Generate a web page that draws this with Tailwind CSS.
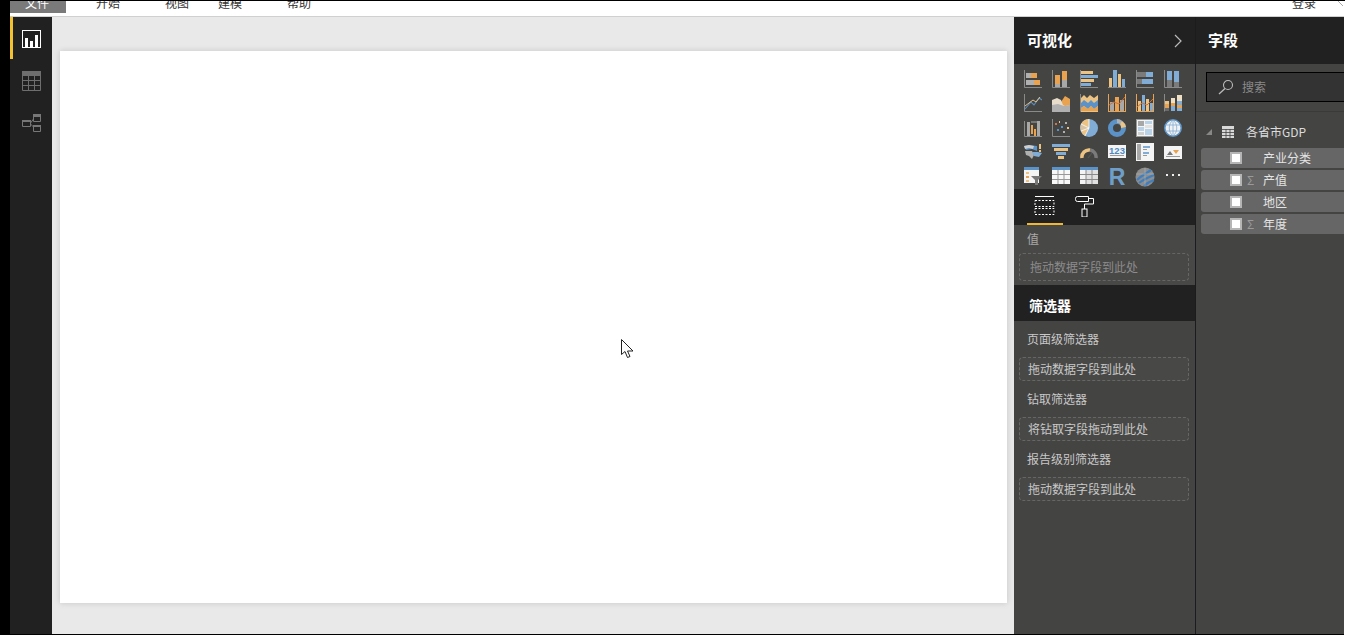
<!DOCTYPE html>
<html lang="zh">
<head>
<meta charset="utf-8">
<title>Power BI Desktop</title>
<script src="https://cdn.jsdelivr.net/npm/@tailwindcss/browser@4"></script>
</head>
<body class="w-[1345px] h-[635px] overflow-hidden bg-white flex font-['Noto_Sans_CJK_SC','Liberation_Sans',sans-serif] text-[12px] leading-[16px]">
<div class="w-[10px] h-full bg-black shrink-0"></div>
<div class="w-[1334px] h-full flex flex-col shrink-0">
  <!-- ribbon -->
  <header class="h-[17px] shrink-0 bg-white border-t border-t-black border-b border-b-[#d0d0d0] flex overflow-hidden text-[#333] text-[12px] leading-[14px] whitespace-nowrap">
    <div class="w-[56px] h-[12px] shrink-0 bg-[#7a7a7a] text-white pl-[15px] overflow-hidden"><span class="block -mt-[5px]">文件</span></div>
    <span class="ml-[30px] -mt-[5px] shrink-0">开始</span>
    <span class="ml-[45px] -mt-[5px] shrink-0">视图</span>
    <span class="ml-[29px] -mt-[5px] shrink-0">建模</span>
    <span class="ml-[45px] -mt-[5px] shrink-0">帮助</span>
    <span class="ml-[981px] -mt-[5px] shrink-0">登录</span>
    <svg class="ml-[22px] shrink-0" width="5" height="5" viewBox="0 0 5 5"><path d="M0 0L5 5" stroke="#aaa" stroke-width="1"/></svg>
  </header>
  <div class="flex-1 flex min-h-0">
    <!-- left nav -->
    <nav class="w-[42px] shrink-0 bg-[#212121] flex flex-col">
      <div class="h-[42px] border-l-[3px] border-l-[#f2c230] pl-[9px] pt-[13px]">
        <svg class="block" width="19" height="19" viewBox="0 0 19 19"><rect x="0.5" y="0.5" width="18" height="17" fill="none" stroke="#fff"/><rect x="3" y="8" width="3" height="9" fill="#fff"/><rect x="8" y="11" width="3" height="6" fill="#fff"/><rect x="13" y="5" width="3" height="12" fill="#fff"/></svg>
      </div>
      <div class="pl-[12px] pt-[12px]">
        <svg class="block" width="19" height="20" viewBox="0 0 19 20"><rect x="0" y="0" width="19" height="5" fill="#6e6e6e"/><path d="M0.5 0.5H18.5V19.5H0.5ZM0.5 9.5H18.5M0.5 14.5H18.5M6.5 4V19.5M12.5 4V19.5" fill="none" stroke="#6e6e6e"/></svg>
      </div>
      <div class="pl-[12px] pt-[23px]">
        <svg class="block" width="19" height="18" viewBox="0 0 19 18"><path d="M0.5 6.5H8.5V12.5H0.5ZM11.5 0.5H18.5V7.5H11.5ZM11.5 11.5H18.5V17.5H11.5ZM8.5 9L11.5 5M8.5 10L11.5 13" fill="none" stroke="#777"/><rect x="11" y="0" width="8" height="3" fill="#777"/><rect x="11" y="11" width="8" height="2" fill="#777"/><rect x="0" y="6" width="9" height="2" fill="#777"/></svg>
      </div>
    </nav>
    <!-- canvas -->
    <main class="w-[962px] shrink-0 bg-[#e9e9e9] pl-[8px] pt-[34px]">
      <div class="w-[947px] h-[552px] bg-white shadow-[0_0_6px_rgba(0,0,0,0.15)]"></div>
    </main>
    <!-- visualizations -->
    <section class="w-[181px] shrink-0 bg-[#444443] flex flex-col">
      <div class="h-[47px] bg-[#212121] flex items-center justify-between pl-[13px] pr-[12px] shrink-0 text-white text-[15px] font-semibold">
        <span class="-mt-[1px]">可视化</span>
        <svg width="10" height="14" viewBox="0 0 10 14"><path d="M2 1L8 7L2 13" fill="none" stroke="#bbb" stroke-width="1.2"/></svg>
      </div>
      <div class="h-[125px] shrink-0 pl-[10px] pt-[6px] grid grid-cols-[repeat(6,18px)] auto-rows-[18px] gap-x-[10px] gap-y-[6.25px]">
        <!-- r1 -->
        <svg width="18" height="18" viewBox="0 0 18 18"><path d="M0.5 0V17.5H18" fill="none" stroke="#8a8a8a"/><rect x="2" y="3" width="5" height="5" fill="#b0b0b0"/><rect x="7" y="3" width="6" height="5" fill="#e9a24f"/><rect x="2" y="10" width="8" height="5" fill="#b0b0b0"/><rect x="10" y="10" width="6" height="5" fill="#e9a24f"/></svg>
        <svg width="18" height="18" viewBox="0 0 18 18"><path d="M0.5 0V17.5H18" fill="none" stroke="#8a8a8a"/><rect x="3" y="5" width="5" height="9" fill="#e9a24f"/><rect x="3" y="14" width="5" height="3" fill="#a8a8a8"/><rect x="10" y="1" width="5" height="9" fill="#e9a24f"/><rect x="10" y="10" width="5" height="7" fill="#a8a8a8"/></svg>
        <svg width="18" height="18" viewBox="0 0 18 18"><path d="M0.5 0V17.5H18" fill="none" stroke="#8a8a8a"/><rect x="1" y="1" width="12" height="3" fill="#ecc383"/><rect x="1" y="5" width="17" height="3" fill="#80acd6"/><rect x="1" y="9" width="13" height="3" fill="#ecc383"/><rect x="1" y="13" width="10" height="3" fill="#80acd6"/></svg>
        <svg width="18" height="18" viewBox="0 0 18 18"><path d="M0 17.5H18" stroke="#8a8a8a"/><rect x="1" y="8" width="3" height="9" fill="#ecc383"/><rect x="5" y="0" width="4" height="17" fill="#80acd6"/><rect x="10" y="4" width="3" height="13" fill="#ecc383"/><rect x="14" y="9" width="3" height="8" fill="#80acd6"/></svg>
        <svg width="18" height="18" viewBox="0 0 18 18"><path d="M0.5 0V17.5H18" fill="none" stroke="#8a8a8a"/><rect x="1" y="2" width="9" height="5" fill="#7b7b7b"/><rect x="10" y="2" width="7" height="5" fill="#80acd6"/><rect x="1" y="9" width="5" height="5" fill="#7b7b7b"/><rect x="6" y="9" width="11" height="5" fill="#80acd6"/></svg>
        <svg width="18" height="18" viewBox="0 0 18 18"><path d="M0.5 0V17.5H18" fill="none" stroke="#8a8a8a"/><rect x="3" y="1" width="5" height="9" fill="#80acd6"/><rect x="3" y="10" width="5" height="7" fill="#7b7b7b"/><rect x="10" y="1" width="5" height="11" fill="#80acd6"/><rect x="10" y="12" width="5" height="5" fill="#7b7b7b"/></svg>
        <!-- r2 -->
        <svg width="18" height="18" viewBox="0 0 18 18"><path d="M0.5 0V17.5H18" fill="none" stroke="#8a8a8a"/><path d="M1 15L7 8L10 11L15 4L18 6" fill="none" stroke="#5b8dbd" stroke-width="1.1"/><path d="M1 12L5 9L9 6L12 8L16 3" fill="none" stroke="#e0c08c" stroke-width="1"/></svg>
        <svg width="18" height="18" viewBox="0 0 18 18"><path d="M0 10L5 5L9 8L13 2L18 5V18H0Z" fill="#e9a24f"/><path d="M0 6L5 4L9 6L11 11L13 12L18 11V18H0Z" fill="#e8dccb"/><path d="M0 11L6 10L12 12L18 11V18H0Z" fill="#b0b0b0"/></svg>
        <svg width="18" height="18" viewBox="0 0 18 18"><path d="M0.5 0V17.5H18" fill="none" stroke="#8a8a8a"/><path d="M1 4L4 1L7 4L10 1L14 4L18 1V18H1Z" fill="#ecc383"/><path d="M1 9L4 6L8 9L11 6L14 9L18 6V12L14 15L11 12L8 15L4 12L1 14Z" fill="#5b93c8"/><path d="M1 14L4 12L8 15L11 12L14 15L18 12V17H1Z" fill="#e9a24f"/></svg>
        <svg width="18" height="18" viewBox="0 0 18 18"><path d="M0.5 0V17.5M17.5 0V17.5M0 17.5H18" fill="none" stroke="#e9a24f"/><rect x="2" y="8" width="4" height="9" fill="#a8a8a8"/><rect x="7" y="3" width="4" height="14" fill="#e9a24f"/><rect x="12" y="6" width="4" height="11" fill="#a8a8a8"/><path d="M1 11L6 8L11 10L17 3" fill="none" stroke="#c9743c"/></svg>
        <svg width="18" height="18" viewBox="0 0 18 18"><path d="M0.5 0V17.5H18M17.5 0V17.5" fill="none" stroke="#e9a24f"/><rect x="2" y="7" width="3" height="10" fill="#ecc383"/><rect x="6" y="1" width="3" height="16" fill="#80acd6"/><rect x="10" y="5" width="3" height="12" fill="#ecc383"/><rect x="14" y="9" width="3" height="8" fill="#80acd6"/><path d="M1 13L6 9L11 11L17 5" fill="none" stroke="#c9743c"/></svg>
        <svg width="18" height="18" viewBox="0 0 18 18"><path d="M0.5 0V17.5" stroke="#8a8a8a"/><rect x="1" y="7" width="4" height="3" fill="#ecc383"/><rect x="1" y="10" width="4" height="4" fill="#e9a24f"/><rect x="1" y="14" width="4" height="3" fill="#6a6a6a"/><rect x="7" y="4" width="4" height="5" fill="#efe0c5"/><rect x="7" y="9" width="4" height="3" fill="#e9a24f"/><rect x="7" y="12" width="4" height="5" fill="#80acd6"/><rect x="13" y="1" width="5" height="6" fill="#efe0c5"/><rect x="13" y="7" width="5" height="4" fill="#80acd6"/><rect x="13" y="11" width="5" height="3" fill="#e9a24f"/><rect x="13" y="14" width="5" height="3" fill="#80acd6"/></svg>
        <!-- r3 -->
        <svg width="18" height="18" viewBox="0 0 18 18"><path d="M0.5 2V17.5H18" fill="none" stroke="#8a8a8a"/><rect x="3" y="3" width="3" height="14" fill="#a8a8a8"/><rect x="7" y="6" width="2" height="9" fill="#e9a24f"/><rect x="10" y="10" width="2" height="7" fill="#e9a24f"/><rect x="13" y="2" width="3" height="15" fill="#a8a8a8"/><path d="M7 3H13" stroke="#a8a8a8"/></svg>
        <svg width="18" height="18" viewBox="0 0 18 18"><path d="M0.5 0V17.5H18" fill="none" stroke="#8a8a8a"/><rect x="3" y="4" width="2" height="2" fill="#d0744a"/><rect x="5" y="10" width="2" height="2" fill="#5b93c8"/><rect x="9" y="7" width="2" height="2" fill="#5b93c8"/><rect x="13" y="3" width="2" height="2" fill="#b0b0b0"/><rect x="15" y="8" width="2" height="2" fill="#ecc383"/><rect x="11" y="12" width="2" height="2" fill="#b0b0b0"/><rect x="7" y="2" width="1" height="2" fill="#ecc383"/></svg>
        <svg width="18" height="18" viewBox="0 0 18 18"><circle cx="9" cy="9" r="9" fill="#80acd6"/><path d="M9 9V0A9 9 0 0 0 1 5Z" fill="#ecc383"/><path d="M9 9L1 5A9 9 0 0 0 1 12Z" fill="#d9c2a0"/><path d="M9 9L1 12A9 9 0 0 0 5 17Z" fill="#ecc383"/><path d="M9 0V9L1 5M9 9L1 12M9 9L5 17" fill="none" stroke="#fff" stroke-width="0.8"/></svg>
        <svg width="18" height="18" viewBox="0 0 18 18"><circle cx="9" cy="9" r="6.5" fill="none" stroke="#5b93c8" stroke-width="5"/><path d="M9 0A9 9 0 0 1 14 2L12 5A5 5 0 0 0 9 4Z" fill="#b0b0b0"/><path d="M14 2A9 9 0 0 1 18 8L13 9A5 5 0 0 0 12 5Z" fill="#ecc383"/></svg>
        <svg width="18" height="18" viewBox="0 0 18 18"><rect x="0.5" y="0.5" width="17" height="17" fill="#f4f4f4" stroke="#999"/><rect x="2" y="2" width="6" height="5" fill="#a8a8a8"/><rect x="9" y="2" width="7" height="3" fill="#b9d2e8"/><rect x="9" y="6" width="7" height="3" fill="#e2e2e2"/><rect x="2" y="8" width="6" height="4" fill="#b9d2e8"/><rect x="2" y="13" width="6" height="3" fill="#d0d0d0"/><rect x="9" y="10" width="7" height="6" fill="#b9d2e8"/></svg>
        <svg width="18" height="18" viewBox="0 0 18 18"><circle cx="9" cy="9" r="8.2" fill="#f2f2f2" stroke="#5b93c8" stroke-width="1.5"/><path d="M1 6H17M1 12H17M9 1V17M9 1C4 5 4 13 9 17M9 1C14 5 14 13 9 17" fill="none" stroke="#80acd6" stroke-width="0.8"/></svg>
        <!-- r4 -->
        <svg width="18" height="18" viewBox="0 0 18 18"><path d="M0 3L5 2L13 3L13 8L8 6L2 7Z" fill="#5b93c8"/><path d="M0 3L5 2L10 3L9 6L5 5L1 6Z" fill="#cfcfcf"/><path d="M1 8L8 8L10 12L8 16L5 13L2 12Z" fill="#b0b0b0"/><path d="M8 9L14 9L18 10L15 14L10 13Z" fill="#80acd6"/><rect x="15" y="1" width="2" height="5" fill="#ecc383"/><rect x="15" y="7" width="2" height="2" fill="#ecc383"/></svg>
        <svg width="18" height="18" viewBox="0 0 18 18"><rect x="0" y="1" width="18" height="3" fill="#80acd6"/><rect x="2" y="5" width="14" height="3" fill="#ecc383"/><rect x="4" y="9" width="10" height="3" fill="#80acd6"/><rect x="6" y="13" width="6" height="3" fill="#ecc383"/></svg>
        <svg width="18" height="18" viewBox="0 0 18 18"><path d="M2 15A7 7 0 0 1 10 7" fill="none" stroke="#ecc383" stroke-width="3.5"/><path d="M10 7A7 7 0 0 1 16 15" fill="none" stroke="#7b7b7b" stroke-width="3.5"/><path d="M8 15L12 10" stroke="#555" stroke-width="1.2"/></svg>
        <svg width="18" height="18" viewBox="0 0 18 18"><rect x="0" y="2" width="18" height="13" fill="#f4f4f4"/><text x="9" y="11" text-anchor="middle" font-family="'Liberation Sans',sans-serif" font-size="9.5" font-weight="700" fill="#4f8bc4">123</text><rect x="2" y="12" width="14" height="1" fill="#999"/></svg>
        <svg width="18" height="18" viewBox="0 0 18 18"><rect x="0" y="0" width="18" height="18" fill="#f4f4f4"/><rect x="1" y="1" width="4" height="16" fill="#a8a8a8"/><rect x="7" y="3" width="7" height="2" fill="#80acd6"/><rect x="7" y="6" width="4" height="1" fill="#999"/><rect x="7" y="9" width="6" height="2" fill="#80acd6"/><rect x="7" y="12" width="4" height="1" fill="#999"/></svg>
        <svg width="18" height="18" viewBox="0 0 18 18"><rect x="0" y="3" width="18" height="13" fill="#f4f4f4"/><path d="M3 12L6 8L9 12Z" fill="#777"/><path d="M9 7H15L12 11Z" fill="#e9a24f"/><rect x="2" y="13" width="14" height="1" fill="#999"/></svg>
        <!-- r5 -->
        <svg width="18" height="18" viewBox="0 0 18 18"><rect x="0" y="0" width="15" height="16" fill="#f4f4f4"/><rect x="0" y="0" width="15" height="3" fill="#5b93c8"/><rect x="2" y="5" width="3" height="2" fill="#ecc383"/><rect x="2" y="9" width="3" height="2" fill="#e9a24f"/><rect x="2" y="13" width="3" height="2" fill="#ecc383"/><path d="M7 9H18L14 13V18H11V13Z" fill="#777"/></svg>
        <svg width="18" height="18" viewBox="0 0 18 18"><rect x="0" y="0" width="18" height="17" fill="#f8f8f8"/><rect x="0" y="0" width="18" height="3" fill="#5b93c8"/><path d="M6 3V17M12 3V17M0 7.5H18M0 12.5H18" stroke="#999" stroke-width="1"/></svg>
        <svg width="18" height="18" viewBox="0 0 18 18"><rect x="0" y="0" width="18" height="17" fill="#e0e0e0"/><rect x="0" y="0" width="18" height="3" fill="#5b93c8"/><rect x="0" y="3" width="6" height="14" fill="#f4f4f4"/><path d="M6 3V17M12 3V17M0 7.5H18M0 12.5H18" stroke="#8a8a8a" stroke-width="1"/></svg>
        <svg width="18" height="18" viewBox="0 0 18 18"><text x="9" y="18" text-anchor="middle" font-family="'Liberation Sans',sans-serif" font-size="23" font-weight="700" fill="#6f9fc9">R</text></svg>
        <svg width="20" height="20" viewBox="0 0 20 20" class="-ml-[1px]"><circle cx="10" cy="10" r="9.5" fill="#8e8e8e"/><path d="M2 13C7 8 12 6 16 3M4 16C9 12 14 10 19 8M9 19C12 16 16 14 19 13" fill="none" stroke="#3f7fbf" stroke-width="2.2"/><path d="M1 7H19M10 1V19" stroke="#bbb" stroke-width="0.5"/></svg>
        <svg width="18" height="18" viewBox="0 0 18 18"><rect x="2" y="7" width="2" height="2" fill="#f0f0f0"/><rect x="8" y="7" width="2" height="2" fill="#f0f0f0"/><rect x="14" y="7" width="2" height="2" fill="#f0f0f0"/></svg>
      </div>
      <div class="h-[36px] shrink-0 bg-[#212121] pl-[13px] flex">
        <div class="w-[36px] h-[36px] border-b-2 border-b-[#f2b731] pl-[7px] pt-[7px]">
          <svg class="block" width="21" height="19" viewBox="0 0 21 19"><path d="M1 0.5H20" stroke="#fff"/><path d="M1 4.5H20V10.5H1ZM1 12.5H20V18.5H1Z" fill="none" stroke="#fff" stroke-dasharray="2 1.5"/></svg>
        </div>
        <div class="pl-[12px] pt-[7px]">
          <svg class="block" width="19" height="21" viewBox="0 0 19 21"><path d="M0.5 2.5Q0.5 0.5 2.5 0.5H13.5V5.5H2.5Q0.5 5.5 0.5 3.5ZM13.5 2.5H18.5V8H9.5V13" fill="none" stroke="#fff"/><rect x="7" y="13" width="5" height="8" fill="none" stroke="#fff"/></svg>
        </div>
      </div>
      <div class="h-[60px] shrink-0 bg-[#484847] px-[5px]">
        <div class="pl-[8px] pt-[6px] h-[28px] text-[#a8a8a8]">值</div>
        <div class="w-[170px] h-[28px] border border-dashed border-[#666] rounded-[4px] pl-[10px] leading-[26px] text-[#8c8c8c]">拖动数据字段到此处</div>
      </div>
      <div class="h-[36px] shrink-0 bg-[#212121] pl-[15px] pt-[4px] flex items-center text-white text-[14px] font-semibold">筛选器</div>
      <div class="flex-1 px-[5px] pt-[10px] text-[#c8c8c8] bg-[#444443]">
        <div class="pl-[8px] h-[26px] leading-[16px]">页面级筛选器</div>
        <div class="w-[170px] h-[24px] border border-dashed border-[#666] rounded-[4px] pl-[8px] leading-[22px] bg-[#484847]">拖动数据字段到此处</div>
        <div class="pl-[8px] h-[36px] pt-[10px] leading-[16px]">钻取筛选器</div>
        <div class="w-[170px] h-[24px] border border-dashed border-[#666] rounded-[4px] pl-[8px] leading-[22px] bg-[#484847]">将钻取字段拖动到此处</div>
        <div class="pl-[8px] h-[36px] pt-[10px] leading-[16px]">报告级别筛选器</div>
        <div class="w-[170px] h-[24px] border border-dashed border-[#666] rounded-[4px] pl-[8px] leading-[22px] bg-[#484847]">拖动数据字段到此处</div>
      </div>
    </section>
    <div class="w-[1px] shrink-0 bg-[#1c1c1c]"></div>
    <!-- fields -->
    <section class="flex-1 min-w-0 bg-[#444443] flex flex-col overflow-hidden">
      <div class="h-[47px] shrink-0 bg-[#212121] pl-[12px] flex items-center text-white text-[15px] font-semibold"><span class="-mt-[1px]">字段</span></div>
      <div class="h-[48px] shrink-0 border-b border-b-[#3a3a3a] pl-[10px] pt-[8px]">
        <div class="h-[30px] bg-[#333] border border-black border-r-0 flex items-center pl-[11px] text-[#8a8a8a]">
          <svg width="16" height="16" viewBox="0 0 16 16"><circle cx="10" cy="6" r="4.5" fill="none" stroke="#bbb" stroke-width="1.1"/><path d="M7 9.5L1 15" stroke="#bbb" stroke-width="1.3"/></svg>
          <span class="ml-[8px]">搜索</span>
        </div>
      </div>
      <div class="h-[36px] shrink-0 flex items-center pl-[10px] pt-[4px] text-[#dcdcdc]">
        <svg width="6" height="6" viewBox="0 0 6 6"><path d="M6 0V6H0Z" fill="#888"/></svg>
        <svg class="ml-[10px]" width="12" height="12" viewBox="0 0 12 12"><rect width="12" height="12" fill="#d8d8d8"/><path d="M0 3.5H12M0 6.5H12M0 9.5H12M4 3V12M8 3V12" stroke="#444" stroke-width="0.8"/></svg>
        <span class="ml-[12px]">各省市GDP</span>
      </div>
      <div class="pl-[5px] flex flex-col gap-[2px] text-[#e4e4e4]">
        <div class="h-[20px] bg-[#666] rounded-l-[3px] flex items-center pl-[29px]"><span class="w-[12px] h-[12px] bg-white border-2 border-[#b5b5b5] shrink-0"></span><span class="ml-[21px]">产业分类</span></div>
        <div class="h-[20px] bg-[#666] rounded-l-[3px] flex items-center pl-[29px]"><span class="w-[12px] h-[12px] bg-white border-2 border-[#b5b5b5] shrink-0"></span><span class="w-[21px] pl-[5px] text-[#9a9a9a]">Σ</span><span>产值</span></div>
        <div class="h-[20px] bg-[#666] rounded-l-[3px] flex items-center pl-[29px]"><span class="w-[12px] h-[12px] bg-white border-2 border-[#b5b5b5] shrink-0"></span><span class="ml-[21px]">地区</span></div>
        <div class="h-[20px] bg-[#666] rounded-l-[3px] flex items-center pl-[29px]"><span class="w-[12px] h-[12px] bg-white border-2 border-[#b5b5b5] shrink-0"></span><span class="w-[21px] pl-[5px] text-[#9a9a9a]">Σ</span><span>年度</span></div>
      </div>
    </section>
  </div>
  <div class="h-[1px] shrink-0 bg-black"></div>
</div>
<div class="w-[1px] h-full bg-white shrink-0 border-t border-t-black"></div>
<svg class="absolute left-[621px] top-[339px]" width="14" height="20" viewBox="0 0 14 20"><path d="M0.5 0.5V15.5L4 12.5L6.5 18.5L9 17.5L6.5 12H12Z" fill="#fff" stroke="#222" stroke-width="1"/></svg>
</body>
</html>
